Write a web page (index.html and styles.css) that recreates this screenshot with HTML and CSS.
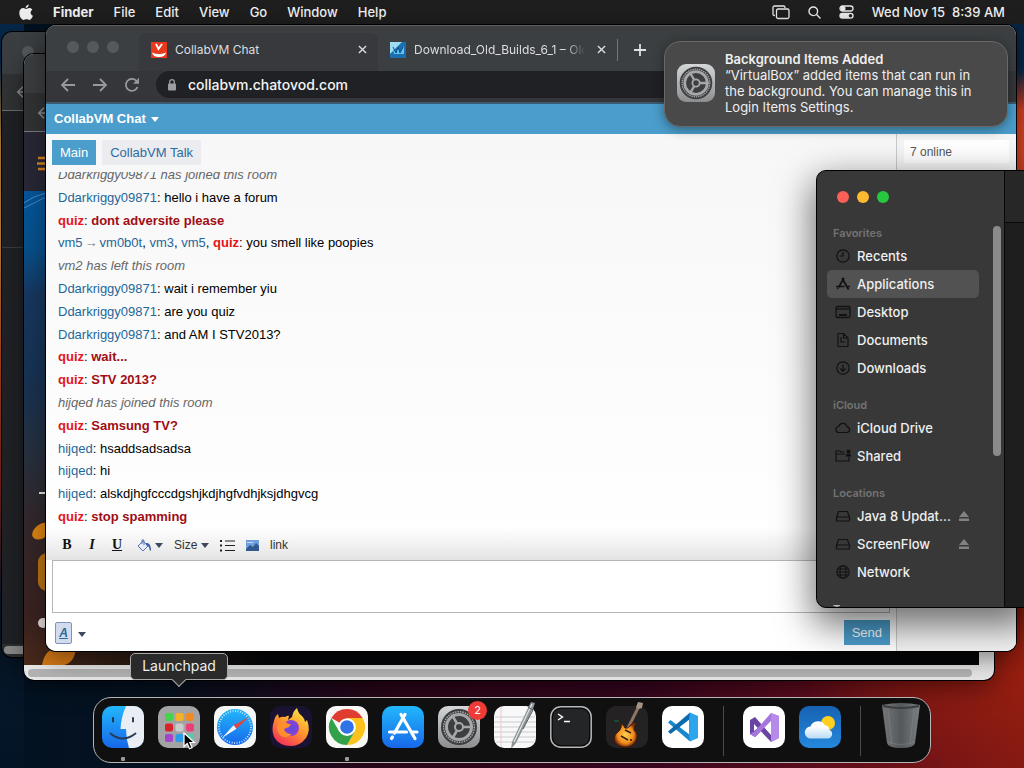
FILE: index.html
```html
<!DOCTYPE html>
<html lang="en">
<head>
  <meta charset="UTF-8" />
  <meta name="viewport" content="width=device-width, initial-scale=1.0" />
  <title>Desktop</title>
  <link rel="stylesheet" href="styles.css">
</head>
<body>
  <!-- ============================
       Shared icon shapes
       ============================ -->
  <svg class="sprite" aria-hidden="true">
    <defs>
      <linearGradient id="gBlue" x1="0" y1="0" x2="0" y2="1"><stop offset="0" stop-color="#22b7fb"/><stop offset="1" stop-color="#1768ea"/></linearGradient>
      <linearGradient id="gGray" x1="0" y1="0" x2="0" y2="1"><stop offset="0" stop-color="#d4d7d8"/><stop offset="1" stop-color="#8b8d8f"/></linearGradient>
      <linearGradient id="gFire" x1="0.8" y1="0" x2="0.2" y2="1"><stop offset="0" stop-color="#ffe84a"/><stop offset="0.45" stop-color="#ff9a2a"/><stop offset="1" stop-color="#f5295c"/></linearGradient>
      <radialGradient id="gGlobe"><stop offset="0" stop-color="#5a4be0"/><stop offset="1" stop-color="#8e3fd0"/></radialGradient>
      <radialGradient id="gGuitar"><stop offset="0" stop-color="#ffd04c"/><stop offset="0.7" stop-color="#f08a1c"/><stop offset="1" stop-color="#7b2b0b"/></radialGradient>
      <linearGradient id="gSky" x1="0" y1="0" x2="0" y2="1"><stop offset="0" stop-color="#1762b3"/><stop offset="1" stop-color="#2588dc"/></linearGradient>
      <linearGradient id="gCloud" x1="0" y1="0" x2="0" y2="1"><stop offset="0.3" stop-color="#ffffff"/><stop offset="1" stop-color="#b9dbf8"/></linearGradient>
      <linearGradient id="gBin" x1="0" y1="0" x2="1" y2="0"><stop offset="0" stop-color="#74787b"/><stop offset="0.5" stop-color="#54585b"/><stop offset="1" stop-color="#7b7f82"/></linearGradient>
      <clipPath id="round"><rect width="42" height="42" rx="10"/></clipPath>
    </defs>
    <symbol id="settings" viewBox="0 0 42 42">
      <rect width="42" height="42" rx="10" fill="url(#gGray)"/>
      <circle cx="21" cy="21" r="18" fill="#3c3e40"/>
      <circle cx="21" cy="21" r="15.3" fill="none" stroke="#a9abad" stroke-width="1.4" stroke-dasharray="1.5 1"/>
      <circle cx="21" cy="21" r="12.5" fill="none" stroke="#a6a8aa" stroke-width="3"/>
      <circle cx="21" cy="21" r="4" fill="none" stroke="#a6a8aa" stroke-width="2"/>
      <path d="M25 21h10M19 24.5l-5 8.5M19 17.500l-5-8.500" stroke="#a6a8aa" stroke-width="2.500"/>
    </symbol>
    <symbol id="disk" viewBox="0 0 16 16"><path d="M3.500 3.500h9l2 6v2.500q0 1-1 1h-11q-1 0-1-1V9.500zM1.500 9h13" fill="none" stroke="#111" stroke-width="1.200"/></symbol>
    <symbol id="cross" viewBox="0 0 10 10"><path d="M1 1l8 8M9 1L1 9" stroke="currentColor" stroke-width="1.500"/></symbol>
    <symbol id="back" viewBox="0 0 16 16"><path d="M15 8H2M8 2L2 8l6 6" fill="none" stroke="currentColor" stroke-width="1.800"/></symbol>
    <symbol id="eject" viewBox="0 0 12 12"><path d="M6 1l5 6H1zM1 8.500h10V11H1z" fill="currentColor"/></symbol>
  </svg>

  <!-- ============================
       Menu Bar
       ============================ -->
  <header class="menu-bar">
    <nav class="menus">
      <button class="apple" aria-label="Apple menu">
        <svg width="14" height="17" viewBox="0 0 14 17"><path fill="#ececec" d="M9.700 0.500c.2 1.800-1.300 3.500-3 3.500C6.500 2.300 8 .7 9.700.5zM7.100 5C7.800 5 8.700 4.100 10.300 4.100c1.300 0 2.400.7 3 1.600-2.500 1.500-2.100 4.900.6 6-.6 1.800-2 4.200-3.500 4.200-1.100 0-1.500-.7-2.900-.7s-1.900.7-2.900.7C2.600 15.900.3 12.400.3 9c0-3.200 2-4.900 3.900-4.900C5.500 4.100 6.400 5 7.100 5z"/></svg>
      </button>
      <button class="app-name">Finder</button>
      <button>File</button>
      <button>Edit</button>
      <button>View</button>
      <button>Go</button>
      <button>Window</button>
      <button>Help</button>
    </nav>
    <div class="status">
      <svg width="18" height="15" viewBox="0 0 18 15" fill="none" stroke="#e8e8e8" stroke-width="1.300"><path d="M3 10.500h-.5Q1 10.500 1 9V2.500Q1 1 2.500 1h9Q13 1 13 2.500V3"/><rect x="4.500" y="4" width="12.500" height="9.500" rx="1.500"/></svg>
      <svg width="13" height="13" viewBox="0 0 13 13" fill="none" stroke="#e8e8e8" stroke-width="1.400"><circle cx="5.300" cy="5.300" r="4.300"/><path d="M8.500 8.500l4 4"/></svg>
      <svg width="15" height="14" viewBox="0 0 15 14"><rect x="1" y="1" width="13" height="5" rx="2.500" fill="none" stroke="#e8e8e8" stroke-width="1.300"/><circle cx="4" cy="3.500" r="2.500" fill="#e8e8e8"/><rect x=".3" y="7.800" width="14.400" height="6" rx="3" fill="#e8e8e8"/><circle cx="11.500" cy="10.800" r="1.800" fill="#222"/></svg>
      <time>Wed Nov 15&nbsp; 8:39 AM</time>
    </div>
  </header>

  <main class="desktop">
    <!-- Windows in the background -->
    <section class="window rear-window" aria-hidden="true">
      <div class="rear-tabs"><i></i></div>
      <div class="rear-toolbar"><svg width="14" height="14"><use href="#back"/></svg></div>
      <div class="rear-page"></div>
      <div class="rear-scroll"><i></i></div>
    </section>

    <section class="window site-window" aria-hidden="true">
      <div class="site-tabs"></div>
      <div class="site-toolbar"><svg width="14" height="14"><use href="#back"/></svg></div>
      <div class="site-head"><svg width="14" height="15" viewBox="0 0 14 15"><path d="M1 2h13M0 7.500h14M1 13h13" stroke="#d9841e" stroke-width="2.500"/></svg></div>
      <div class="site-hero">
        <svg viewBox="0 0 60 474" width="60" height="474">
          <path d="M0 12Q9 5 22 2M0 17L22 6" stroke="#4b88c2" fill="none"/>
          <path d="M15 302h7" stroke="#e8e4e0" stroke-width="2"/>
          <ellipse cx="18" cy="340" rx="11" ry="7" fill="#d98312" transform="rotate(-35 18 340)"/>
          <rect x="14" y="362" width="20" height="38" rx="9" fill="#b87313"/>
          <circle cx="19" cy="432" r="5" fill="#e4dad8"/>
          <path d="M18 474q3-16 14-16h20q-2 14-12 16z" fill="#d27716"/>
        </svg>
      </div>
      <div class="site-scroll"><i></i></div>
    </section>

    <!-- ============================
         Browser Window
         ============================ -->
    <section class="window browser">
      <div class="tab-strip">
        <div class="lights"><i></i><i></i><i></i></div>
        <div class="tab tab-active">
          <svg class="favicon" width="16" height="16" viewBox="0 0 16 16"><rect width="16" height="16" fill="#e8391e"/><path d="M5 2l2.500 5L11 2" fill="none" stroke="#fff" stroke-width="1.800"/><path d="M1 10.500q7 3 14 0-1 4.500-7 4.500t-7-4.500z" fill="#fff"/></svg>
          <span class="tab-title">CollabVM Chat</span>
          <button aria-label="Close tab"><svg width="9" height="9"><use href="#cross"/></svg></button>
        </div>
        <div class="tab">
          <svg class="favicon" width="16" height="16" viewBox="0 0 16 16"><rect width="16" height="16" fill="#1b6fae"/><path d="M0 0h12L0 12z" fill="#9ddcf2"/><path d="M3 6l3 5 2-6 2 6 4-7v8H4z" fill="#5cc5f0"/><path d="M3 5l3 6 2-6 2 6 3-6" fill="none" stroke="#0d4f8c"/></svg>
          <span class="tab-title tab-fade">Download_Old_Builds_6_1 – Old</span>
          <button aria-label="Close tab"><svg width="9" height="9"><use href="#cross"/></svg></button>
        </div>
        <button class="new-tab" aria-label="New tab"><svg width="12" height="12" viewBox="0 0 12 12"><path d="M6 0v12M0 6h12" stroke="#dfe0e2" stroke-width="1.800"/></svg></button>
      </div>
      <div class="address-row">
        <button aria-label="Back"><svg width="16" height="16"><use href="#back"/></svg></button>
        <button class="forward" aria-label="Forward"><svg width="16" height="16"><use href="#back"/></svg></button>
        <button aria-label="Reload"><svg width="16" height="16" viewBox="0 0 16 16"><path d="M13.500 10A6 6 0 1 1 12.500 4" fill="none" stroke="currentColor" stroke-width="1.800"/><path d="M15 .8v5.900H9.100z" fill="currentColor"/></svg></button>
        <label class="address">
          <svg width="10" height="12" viewBox="0 0 10 12"><rect x="1" y="4.500" width="8" height="7" rx="1" fill="#9b9da0"/><path d="M2.700 5V3a2.300 2.300 0 0 1 4.600 0v2" fill="none" stroke="#9b9da0" stroke-width="1.300"/></svg>
          <input type="text" value="collabvm.chatovod.com" aria-label="Address" />
        </label>
      </div>

      <div class="chat-title"><button>CollabVM Chat <i class="caret"></i></button></div>

      <div class="chat">
        <div class="chat-main">
          <div class="rooms">
            <button class="room-active">Main</button>
            <button>CollabVM Talk</button>
          </div>
          <div class="log">
            <ul>
              <li class="notice">Ddarkriggy09871 has joined this room</li>
              <li><a href="#">Ddarkriggy09871</a>: hello i have a forum</li>
              <li class="mod"><a href="#">quiz</a>: <b>dont adversite please</b></li>
              <li><a href="#">vm5</a><span class="arrow">→</span><a href="#">vm0b0t</a>, <a href="#">vm3</a>, <a href="#">vm5</a>, <a href="#" class="mod-name">quiz</a>: you smell like poopies</li>
              <li class="notice">vm2 has left this room</li>
              <li><a href="#">Ddarkriggy09871</a>: wait i remember yiu</li>
              <li><a href="#">Ddarkriggy09871</a>: are you quiz</li>
              <li><a href="#">Ddarkriggy09871</a>: and AM I STV2013?</li>
              <li class="mod"><a href="#">quiz</a>: <b>wait...</b></li>
              <li class="mod"><a href="#">quiz</a>: <b>STV 2013?</b></li>
              <li class="notice">hijqed has joined this room</li>
              <li class="mod"><a href="#">quiz</a>: <b>Samsung TV?</b></li>
              <li><a href="#">hijqed</a>: hsaddsadsadsa</li>
              <li><a href="#">hijqed</a>: hi</li>
              <li><a href="#">hijqed</a>: alskdjhgfcccdgshjkdjhgfvdhjksjdhgvcg</li>
              <li class="mod"><a href="#">quiz</a>: <b>stop spamming</b></li>
            </ul>
          </div>
          <div class="format-bar">
            <button class="fmt-bold">B</button>
            <button class="fmt-italic">I</button>
            <button class="fmt-underline">U</button>
            <button class="fmt-color" aria-label="Colour"><svg width="15" height="13" viewBox="0 0 15 13"><path d="M1 7l5-5 5 5-5 5zM5 5V1q2-1 2 1v4" fill="#e6ebf7" stroke="#5b75b5"/><path d="M9 4q5-1 5 8-2-1-2-4L9 6z" fill="#3f5fa8"/></svg><i class="caret"></i></button>
            <label class="fmt-size"><select aria-label="Size"><option>Size</option></select><i class="caret"></i></label>
            <button aria-label="List"><svg width="15" height="13" viewBox="0 0 15 13"><path d="M5 2h10M5 6.500h10M5 11.500h10" stroke="#222"/><path d="M0 1h2v2H0zM0 5.500h2v2H0zM0 10.500h2v2H0z" fill="#222"/></svg></button>
            <button aria-label="Picture"><svg width="13" height="11" viewBox="0 0 13 11"><rect width="13" height="11" fill="#6f9fdc"/><path d="M0 9l4-4 3 2 3-4 3 3v5H0z" fill="#31598f"/><path d="M1 2h6v1H1z" fill="#c9ddf3"/></svg></button>
            <button>link</button>
          </div>
          <textarea class="message" aria-label="Message"></textarea>
          <div class="send-row">
            <button class="style-btn">A</button>
            <button aria-label="More styles"><i class="caret"></i></button>
            <button class="send">Send</button>
          </div>
        </div>
        <aside class="online"><div>7 online</div></aside>
      </div>
    </section>

    <!-- ============================
         Finder Window
         ============================ -->
    <section class="finder">
      <nav class="sidebar">
        <div class="finder-lights"><i class="red"></i><i class="yellow"></i><i class="green"></i></div>
        <h2>Favorites</h2>
        <a href="#"><svg width="16" height="16" viewBox="0 0 16 16" fill="none" stroke="#111" stroke-width="1.200"><circle cx="8" cy="8" r="6.200"/><path d="M8 4v4H5"/></svg>Recents</a>
        <a href="#" class="selected"><svg width="16" height="16" viewBox="0 0 16 16" fill="none" stroke="#111" stroke-width="1.700"><path d="M7 2l6.500 11.500M9 2L3.500 11.500M1 10.500h8.500M12 10.500h3M2.500 13l.5-1"/></svg>Applications</a>
        <a href="#"><svg width="16" height="16" viewBox="0 0 16 16" fill="none" stroke="#111" stroke-width="1.300"><rect x="1" y="2.500" width="14" height="11" rx="1.500"/><path d="M1 5h14"/><path d="M4 11h8" stroke-width="2"/></svg>Desktop</a>
        <a href="#"><svg width="16" height="16" viewBox="0 0 16 16" fill="none" stroke="#111" stroke-width="1.200"><path d="M3 1.500h5.500L13 6v8.500H3zM8.500 1.500V6H13M6 5v5h4"/></svg>Documents</a>
        <a href="#"><svg width="16" height="16" viewBox="0 0 16 16" fill="none" stroke="#111" stroke-width="1.200"><circle cx="8" cy="8" r="6.200"/><path d="M8 4.500v7M5.300 8.500L8 11.300l2.700-2.800"/></svg>Downloads</a>
        <h2>iCloud</h2>
        <a href="#"><svg width="16" height="16" viewBox="0 0 16 16" fill="none" stroke="#111" stroke-width="1.200"><path d="M4 12.500a3 3 0 0 1-.3-6A4.300 4.300 0 0 1 12 6.800a2.900 2.900 0 0 1 .3 5.700z"/></svg>iCloud Drive</a>
        <a href="#"><svg width="16" height="16" viewBox="0 0 16 16" fill="none" stroke="#111" stroke-width="1.200"><path d="M9 4H6L5 3H1v10h13V9M1 6h9"/><circle cx="13.500" cy="3.500" r="1.500" fill="#111"/><path d="M11.500 8q0-2 2-2t2 2z" fill="#111"/></svg>Shared</a>
        <h2>Locations</h2>
        <a href="#"><svg width="16" height="16"><use href="#disk"/></svg>Java 8 Updat...<svg class="eject" width="12" height="12"><use href="#eject"/></svg></a>
        <a href="#"><svg width="16" height="16"><use href="#disk"/></svg>ScreenFlow<svg class="eject" width="12" height="12"><use href="#eject"/></svg></a>
        <a href="#"><svg width="16" height="16" viewBox="0 0 16 16" fill="none" stroke="#111" stroke-width="1.100"><circle cx="8" cy="8" r="6.200"/><ellipse cx="8" cy="8" rx="3" ry="6.200"/><path d="M2 8h12M3 5h10M3 11h10"/></svg>Network</a>
        <h2 class="tags">Tags</h2>
        <div class="thumb"></div>
      </nav>
      <div class="finder-files"><div class="finder-toolbar"></div></div>
    </section>

    <!-- Notification -->
    <aside class="notification">
      <svg width="38" height="38"><use href="#settings"/></svg>
      <div>
        <h3>Background Items Added</h3>
        <p>“VirtualBox” added items that can run in the background. You can manage this in Login Items Settings.</p>
      </div>
    </aside>
  </main>

  <!-- ============================
       Dock
       ============================ -->
  <nav class="dock">
    <button class="running" aria-label="Finder"><svg width="42" height="42" viewBox="0 0 42 42"><g clip-path="url(#round)"><rect width="42" height="42" fill="url(#gBlue)"/><path d="M24 0q-5 11-5.500 23H24q0 10 3 19h15V0z" fill="#e9edf4"/></g><path d="M11 12v3.500M31 12v3.500" stroke="#1c2b40" stroke-width="1.800" stroke-linecap="round"/><path d="M8.500 27.500q12 10 25 0" fill="none" stroke="#243a56" stroke-width="1.800" stroke-linecap="round"/></svg></button>
    <button aria-label="Launchpad">
      <svg width="42" height="42" viewBox="0 0 42 42"><rect width="42" height="42" rx="10" fill="#a3a3a5"/><rect x="7" y="7" width="8" height="8" rx="2" fill="#45d34d"/><rect x="17.500" y="7" width="8" height="8" rx="2" fill="#f5b127"/><rect x="28" y="7" width="8" height="8" rx="2" fill="#f28a22"/><rect x="7" y="17.500" width="8" height="8" rx="2" fill="#d82328"/><rect x="17.500" y="17.500" width="8" height="8" rx="2" fill="#c8cccb"/><rect x="28" y="17.500" width="8" height="8" rx="2" fill="#ec3f78"/><rect x="7" y="28" width="8" height="8" rx="2" fill="#a443cb"/><rect x="17.500" y="28" width="8" height="8" rx="2" fill="#2a9be8"/><rect x="28" y="28" width="8" height="8" rx="2" fill="#56c9b0"/></svg>
      <span class="tooltip">Launchpad</span>
      <svg class="cursor" width="13" height="18" viewBox="0 0 13 18"><path d="M1 1v13.500l3.200-3 2.300 5.300 2.600-1.100-2.300-5.200h4.700z" fill="#000" stroke="#fff" stroke-width="1.200"/></svg>
    </button>
    <button aria-label="Safari"><svg width="42" height="42" viewBox="0 0 42 42"><rect width="42" height="42" rx="10" fill="#f5f6f6"/><circle cx="21" cy="21" r="18" fill="url(#gBlue)"/><circle cx="21" cy="21" r="16" fill="none" stroke="#d9efff" stroke-width="2" stroke-dasharray=".8 1.700"/><path d="M35 11L22.500 22.800l-3-3.600z" fill="#e2453c"/><path d="M8 32l11.500-12.800 3 3.600z" fill="#f4f6f8"/></svg></button>
    <button aria-label="Firefox"><svg width="42" height="42" viewBox="0 0 42 42"><rect width="42" height="42" rx="10" fill="#1a1230"/><path d="M4 15q1-5 4-7l1 4q3-2 6-1 3-2 4-1l-1 4 4-3q1-6 5-9 1 5 5 8 3 3 3 6l2-2q4 10-1 18-6 8-15 8Q9 40 4 31 1 23 4 15z" fill="url(#gFire)"/><circle cx="21" cy="22" r="8" fill="url(#gGlobe)"/><path d="M8 18q3-4 8-2 1 2 5 2l-2 3-5 2q1 5 8 5-6 6-12 1-4-5-2-11z" fill="#ff8f2b"/></svg></button>
    <button class="running" aria-label="Chrome"><svg width="42" height="42" viewBox="0 0 42 42"><rect width="42" height="42" rx="10" fill="#f7f7f5"/><path d="M21 21L5.410 12A18 18 0 0 1 36.590 12z" fill="#e13c30"/><path d="M21 12h15.590A18 18 0 0 1 21 39l7.800-13.500z" fill="#fbc21c"/><path d="M5.410 12L13.200 25.500 21 30l7.800-4.500L21 39A18 18 0 0 1 5.410 12z" fill="#33a14a"/><circle cx="21" cy="21" r="8.800" fill="#fff"/><circle cx="21" cy="21" r="6.800" fill="#2f73e6"/></svg></button>
    <button aria-label="App Store"><svg width="42" height="42" viewBox="0 0 42 42"><rect width="42" height="42" rx="10" fill="url(#gBlue)"/><path d="M19 8.500l14 24M23 8.500L12.500 27M7.500 26h17M30 26h5M10.500 31l-1 1.500" fill="none" stroke="#fff" stroke-width="3.200" stroke-linecap="round"/></svg></button>
    <button aria-label="System Settings"><svg width="42" height="42"><use href="#settings"/></svg><span class="badge">2</span></button>
    <button aria-label="TextEdit"><svg width="42" height="46" viewBox="0 -4 42 46" class="tall"><rect width="42" height="42" rx="10" fill="#f8f8f8"/><path d="M1 11h40M0 16h42M0 21h42M0 26h42M0 31h42M2 36h38" stroke="#c8ccd1"/><path d="M7 1v40" stroke="#f0c8c8"/><path d="M37-4l4 1-2 6-17 34-5 6 1-7L34 2z" fill="#8d9295"/><path d="M38-2L20 36" stroke="#e0e3e5" stroke-width="1.300"/><path d="M34 1l5 3-10 19" fill="none" stroke="#55595c"/></svg></button>
    <button aria-label="Terminal"><svg width="42" height="42" viewBox="0 0 42 42"><rect x=".8" y=".8" width="40.400" height="40.400" rx="10" fill="#0c0c0c" stroke="#b5b8ba" stroke-width="1.500"/><rect x="3" y="3" width="36" height="36" rx="8" fill="#242527"/><path d="M8 8l4.500 3L8 14M14 15.500h6" fill="none" stroke="#fff" stroke-width="1.400"/></svg></button>
    <button aria-label="GarageBand"><svg width="42" height="46" viewBox="0 -4 42 46" class="tall"><rect width="42" height="42" rx="10" fill="#242223"/><path d="M8 15h5" stroke="#176b47"/><path d="M33 0L21 24" stroke="#8d7563" stroke-width="3"/><path d="M32-4l5 1-1 5-4 1-2-2z" fill="#a59483"/><path d="M15 18q2-1 4 4 2 1 5-2 3-5 6-3-2 4-2 7 5 4 2 11-4 7-12 6-9-1-10-8 0-5 5-8 3-3 2-7z" fill="url(#gGuitar)" stroke="#3e1808"/><path d="M19 24l6 3M15 30l7 4" stroke="#3c2011" stroke-width="1.500"/><circle cx="25" cy="34" r="1" fill="#26110a"/></svg></button>
    <button aria-label="Visual Studio Code"><svg width="42" height="42" viewBox="0 0 42 42"><rect width="42" height="42" rx="10" fill="#fff"/><path d="M6 16.500L8.500 14 28 29v6.500z" fill="#1787cf"/><path d="M6 25.500L8.500 28 28 13V6.500z" fill="#0b69ae"/><path d="M28 6.500l8 3.500v22l-8 3.500-1-6.500V13z" fill="#2ca5ec"/></svg></button>
    <span class="divider"></span>
    <button aria-label="Visual Studio"><svg width="42" height="42" viewBox="0 0 42 42"><rect width="42" height="42" rx="10" fill="#fff"/><path d="M7 14l5-3 16 18v7L11 18v7l4-3 3 3-6 6-5-3z" fill="#6a43a5"/><path d="M28 7L12 25l-5 3 5 3 16-16v21l8-4V10z" fill="#a676dc"/><path d="M28 7v29l8-4V10z" fill="#b58ae8"/></svg></button>
    <button aria-label="Weather"><svg width="42" height="42" viewBox="0 0 42 42"><rect width="42" height="42" rx="10" fill="url(#gSky)"/><circle cx="29" cy="17" r="7" fill="#ffcf1f"/><path d="M12 32.500a6 6 0 0 1-.5-12A8 8 0 0 1 26 19.500q4 0 4.500 4.500a4.500 4.500 0 0 1-1 8.500z" fill="url(#gCloud)"/></svg></button>
    <span class="divider"></span>
    <button aria-label="Trash"><svg width="42" height="46" viewBox="0 -2 42 46" class="tall"><path d="M2 1q19-4 38 0l-5 38q-1 5-14 5T7 39z" fill="url(#gBin)"/><path d="M3 2q18 4 36 0" fill="none" stroke="#3c3f41" stroke-width="2"/><path d="M8 5l4 35M34 5l-4 35M8 38q12 5 26 0" stroke="#8a8e90" fill="none" opacity=".4"/></svg></button>
  </nav>
</body>
</html>
```
FILE: styles.css
```css
/* ============================
   Basic Reset
   ============================ */
* {
  margin: 0;
  padding: 0;
  box-sizing: border-box;
}

body {
  height: 100vh;
  overflow: hidden;
  position: relative;
  font-family: Inter, "Liberation Sans", sans-serif;
  font-size: 13px;
  background:
    linear-gradient(180deg, #08233f 0, #0a2747 70px, transparent 110px) right top / 40px 120px no-repeat,
    linear-gradient(180deg, #062645 0, #072a4c 60px, #c98d3a 140px, #d68f44 240px, #c04a22 360px, #8c2420 480px, #0a1a2c 600px, #021426 100%) left top / 24px 100% no-repeat,
    radial-gradient(ellipse 360px 560px at 100% 32%, #e8502e 0, #a6240f 60%, transparent 100%),
    linear-gradient(90deg, #021222 0, #06111f 16%, #2a0619 38%, #35061f 62%, #5d0c1b 80%, #7f1712 100%);
}

button {
  background: none;
  border: none;
  font: inherit;
  color: inherit;
}

svg {
  display: block;
  flex: none;
}

a {
  text-decoration: none;
}

.sprite {
  position: absolute;
  width: 0;
  height: 0;
}

/* ============================
   Menu Bar
   ============================ */
.menu-bar {
  display: flex;
  justify-content: space-between;
  align-items: center;
  height: 24px;
  padding: 0 19px;
  background: #1e1e1e;
  color: #f0f0f0;
  font-weight: 500;
}

.menus,
.status {
  display: flex;
  align-items: center;
  gap: 20px;
}

.app-name {
  font-weight: 700;
}

.status {
  gap: 18px;
}

/* ============================
   Background Windows
   ============================ */
.window {
  position: absolute;
  display: flex;
  flex-direction: column;
  overflow: hidden;
  border-radius: 10px;
  box-shadow: 0 0 0 1px #000, 0 8px 24px rgba(0, 0, 0, 0.4);
}

.rear-window {
  top: 32px;
  bottom: 111px;
  left: 2px;
  right: 60px;
  color: #85888b;
  background: #1f2124;
}

.rear-tabs {
  height: 42px;
  padding: 14px 20px;
  background: #3a3e40;
}

.rear-tabs i {
  display: block;
  width: 12px;
  height: 12px;
  border-radius: 50%;
  background: #55595c;
}

.rear-toolbar {
  height: 37px;
  padding: 11px 14px;
  background: #303234;
  border-bottom: 1px solid #6a6c6e;
}

.rear-page {
  height: 137px;
  border-bottom: 1px solid #3a3d40;
}

.rear-scroll {
  margin-top: auto;
  height: 13px;
  padding: 2px;
  background: #2c2e30;
}

.rear-scroll i,
.site-scroll i {
  display: block;
  height: 8px;
  border-radius: 4px;
  background: #8a8a8a;
}

.site-window {
  top: 54px;
  bottom: 88px;
  left: 24px;
  right: 30px;
  color: #85888b;
  background: #e6e6e6;
}

.site-tabs {
  height: 40px;
  background: #3a3d3f;
}

.site-toolbar {
  height: 39px;
  padding: 13px;
  background: #303234;
  border-bottom: 1px solid #77797b;
}

.site-head {
  height: 59px;
  padding: 24px 13px;
  background: #282735;
}

.site-hero {
  flex: 1;
  margin-right: 15px;
  background:
    linear-gradient(90deg, transparent 0, #060709 240px) bottom / 100% 14px no-repeat,
    linear-gradient(180deg, #04559a 0, #07508a 12%, #17375f 22%, #173252 40%, #26303f 55%, #33272b 70%, #3a2220 90%, #4a2a1a 100%);
}

.site-scroll {
  height: 15px;
  padding: 4px 22px 3px 4px;
}

.site-scroll i {
  background: #b2b2b2;
}

/* ============================
   Browser Window
   ============================ */
.browser {
  top: 25px;
  bottom: 117px;
  left: 46px;
  right: 8px;
  background: #fff;
}

.tab-strip {
  display: flex;
  align-items: flex-end;
  height: 46px;
  padding-left: 21px;
  background: #3c3f41;
  border-top: 1px solid #5a5c5e;
  color: #dcdde0;
  font-size: 12px;
}

.lights,
.finder-lights {
  display: flex;
  gap: 8px;
}

.lights {
  align-self: center;
  padding-bottom: 4px;
  margin-right: 20px;
}

.lights i,
.finder-lights i {
  width: 12px;
  height: 12px;
  border-radius: 50%;
  background: #56595c;
}

.tab {
  display: flex;
  align-items: center;
  gap: 8px;
  width: 239px;
  height: 38px;
  padding: 0 11px 5px 12px;
}

.tab-active {
  background: #37393c;
  border-radius: 8px 8px 0 0;
}

.tab-title {
  flex: 1;
  overflow: hidden;
  white-space: nowrap;
}

.tab-fade {
  mask-image: linear-gradient(90deg, #000 86%, transparent 98%);
}

.new-tab {
  height: 22px;
  margin-bottom: 10px;
  padding: 0 16px;
  border-left: 1px solid #75787a;
}

.address-row {
  display: flex;
  align-items: center;
  gap: 16px;
  height: 33px;
  padding: 0 8px 4px 14px;
  background: #353639;
  border-bottom: 2px solid #3c5a70;
  color: #97999c;
}

.forward svg {
  transform: scaleX(-1);
}

.address {
  display: flex;
  flex: 1;
  align-items: center;
  gap: 11px;
  height: 27px;
  padding: 0 11px;
  border-radius: 14px;
  background: #202124;
}

.address input {
  flex: 1;
  border: none;
  outline: none;
  background: none;
  color: #f4f4f4;
  font: 500 14px Inter, sans-serif;
}

/* ============================
   Chat Page
   ============================ */
.caret {
  display: inline-block;
  border: 4px solid transparent;
  border-top: 5px solid currentColor;
  border-bottom: 0;
}

.chat-title,
.chat,
.chat textarea,
.chat select {
  font-family: "Liberation Sans", Arial, sans-serif;
  font-size: 13px;
}

.chat-title {
  height: 30px;
  padding: 0 8px;
  background: #4b9dcb;
  color: #fff;
  font-weight: 700;
  line-height: 30px;
}

.chat-title .caret {
  margin: 0 0 1px 2px;
}

.chat {
  display: flex;
  flex: 1;
  min-height: 0;
  background: linear-gradient(180deg, #f7f7f7, #fff 80%);
}

.chat-main {
  display: flex;
  flex: 1;
  flex-direction: column;
  min-width: 0;
  padding: 6px;
}

.rooms {
  display: flex;
  gap: 6px;
  height: 25px;
  margin-bottom: 7px;
}

.rooms button {
  padding: 0 8px;
  background: #ebecef;
  color: #2f6ba0;
}

.rooms .room-active {
  background: #4b9dcb;
  color: #fff;
}

.log {
  flex: 1;
  min-height: 0;
  padding: 0 6px;
  overflow: hidden;
}

.log ul {
  display: flex;
  flex-direction: column;
  justify-content: space-between;
  height: calc(100% + 8px);
  margin-top: -8px;
  list-style: none;
}

.log li {
  height: 22px;
  line-height: 22px;
}

.log a {
  color: #1f6799;
}

.log .notice {
  color: #666;
  font-style: italic;
}

.log .mod b {
  color: #a00d14;
}

.log .mod a,
.log .mod-name {
  color: #e3161b;
  font-weight: 700;
}

.arrow {
  margin: 0 2px;
  color: #777;
}

.format-bar {
  display: flex;
  align-items: center;
  gap: 11px;
  height: 32px;
  margin: 0 -6px;
  padding: 2px 14px 0;
  background: linear-gradient(180deg, transparent, #e4e4e4);
  color: #333;
  font-size: 12px;
}

.format-bar .caret,
.send-row .caret {
  color: #40485e;
}

.fmt-bold,
.fmt-italic,
.fmt-underline {
  width: 14px;
  color: #111;
  font-family: "Liberation Serif", serif;
  font-size: 14px;
  font-weight: 700;
}

.fmt-italic {
  font-style: italic;
}

.fmt-underline {
  text-decoration: underline;
}

.fmt-color,
.fmt-size {
  display: flex;
  align-items: center;
  gap: 3px;
}

.fmt-color {
  margin-left: 2px;
}

.fmt-size select {
  appearance: none;
  border: none;
  background: none;
  color: inherit;
  font-size: 12px;
}

.message {
  display: block;
  height: 53px;
  border: 1px solid #b5b5b5;
  background: #fff;
  resize: none;
}

.send-row {
  display: flex;
  align-items: center;
  gap: 6px;
  height: 32px;
  padding: 7px 0 0 3px;
}

.style-btn {
  width: 17px;
  height: 22px;
  border: 1px solid #7e93bd;
  border-radius: 2px;
  background: #d3dcee;
  color: #2a6a95;
  font-size: 12px;
  font-style: italic;
  font-weight: 700;
  text-decoration: underline;
}

.send {
  margin-left: auto;
  height: 25px;
  padding: 0 8px;
  background: #4b9dcb;
  color: #fff;
}

.online {
  width: 120px;
  padding: 6px 7px;
  border-left: 1px solid #c9c9c9;
  background: #f5f5f5;
  color: #555;
  font-size: 12px;
}

.online div {
  height: 23px;
  padding: 0 6px;
  background: #fff;
  line-height: 24px;
}

/* ============================
   Finder Window
   ============================ */
.finder {
  position: absolute;
  top: 170px;
  left: 816px;
  right: -4px;
  display: flex;
  height: 438px;
  overflow: hidden;
  border: 1px solid #000;
  border-radius: 10px 0 0 10px;
  background: #1e1e1e;
  box-shadow: 0 14px 36px 4px rgba(0, 0, 0, 0.55);
}

.sidebar {
  position: relative;
  width: 188px;
  padding: 20px 25px 0 10px;
  border-right: 1px solid #080808;
  background: #383838;
}

.finder-lights {
  margin-bottom: 21px;
  padding-left: 10px;
}

.finder-lights .red {
  background: #fb5f57;
}

.finder-lights .yellow {
  background: #fdba30;
}

.finder-lights .green {
  background: #27c840;
}

.sidebar h2 {
  margin-top: 14px;
  padding-left: 6px;
  color: #737373;
  font-size: 11px;
  font-weight: 600;
  line-height: 18px;
}

.sidebar .tags {
  color: #bbb;
}

.sidebar a {
  display: flex;
  align-items: center;
  gap: 6px;
  height: 28px;
  padding: 0 9px 0 8px;
  border-radius: 5px;
  color: #efefef;
  font-weight: 500;
  white-space: nowrap;
}

.sidebar .selected {
  background: #525252;
}

.eject {
  margin-left: auto;
  color: #828282;
}

.thumb {
  position: absolute;
  top: 55px;
  right: 3px;
  width: 8px;
  height: 230px;
  border-radius: 4px;
  background: #8a8a8a;
}

.finder-files {
  flex: 1;
}

.finder-toolbar {
  height: 52px;
  background: #272727;
  border-bottom: 1px solid #080808;
}

/* ============================
   Notification
   ============================ */
.notification {
  position: absolute;
  top: 41px;
  right: 16px;
  display: flex;
  align-items: center;
  gap: 10px;
  width: 344px;
  height: 86px;
  padding: 0 32px 2px 12px;
  border: 1px solid #686868;
  border-radius: 16px;
  background: #494949;
  box-shadow: 0 2px 12px rgba(0, 0, 0, 0.4);
  color: #efefef;
  line-height: 16px;
}

.notification h3 {
  font-size: 13px;
  font-weight: 600;
}

/* ============================
   Dock
   ============================ */
.dock {
  position: absolute;
  bottom: 5px;
  left: 50%;
  display: flex;
  gap: 14px;
  height: 66px;
  padding: 8px;
  border: 1px solid #b9b4b6;
  border-radius: 18px;
  background: #101010;
  transform: translateX(-50%);
}

.dock button {
  position: relative;
  width: 42px;
  height: 42px;
}

.dock .tall {
  margin-top: -4px;
}

.running::after {
  content: "";
  position: absolute;
  bottom: -13px;
  left: 19px;
  width: 4px;
  height: 4px;
  border-radius: 1px;
  background: #9a9a9a;
}

.divider {
  width: 1px;
  height: 50px;
  margin: 0 5px;
  background: #4b4b4b;
}

.badge {
  position: absolute;
  top: -5px;
  right: -7px;
  width: 19px;
  height: 19px;
  border-radius: 50%;
  background: #ee3b38;
  color: #fff;
  font-size: 11px;
  line-height: 19px;
}

.tooltip {
  position: absolute;
  bottom: 68px;
  left: 50%;
  width: 98px;
  height: 27px;
  border: 1px solid #a8a8a8;
  border-radius: 5px;
  background: #2a2a2a;
  color: #f0f0f0;
  font-size: 14px;
  line-height: 24px;
  transform: translateX(-50%);
}

.tooltip::after {
  content: "";
  position: absolute;
  top: 21px;
  left: 43px;
  width: 9px;
  height: 9px;
  border: solid #a8a8a8;
  border-width: 0 1px 1px 0;
  background: #2a2a2a;
  transform: rotate(45deg);
}

.cursor {
  position: absolute;
  top: 26px;
  left: 25px;
}
```
